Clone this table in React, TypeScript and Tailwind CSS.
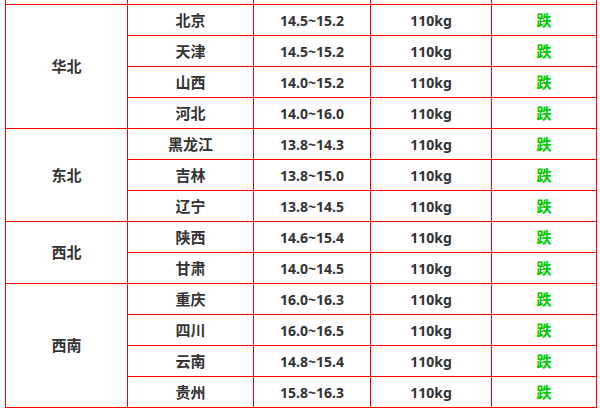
import React from "react";

type Row = { city: string; range: string };
type Group = { region: string; rows: Row[] };

const groups: Group[] = [
  {
    region: "华北",
    rows: [
      { city: "北京", range: "14.5~15.2" },
      { city: "天津", range: "14.5~15.2" },
      { city: "山西", range: "14.0~15.2" },
      { city: "河北", range: "14.0~16.0" },
    ],
  },
  {
    region: "东北",
    rows: [
      { city: "黑龙江", range: "13.8~14.3" },
      { city: "吉林", range: "13.8~15.0" },
      { city: "辽宁", range: "13.8~14.5" },
    ],
  },
  {
    region: "西北",
    rows: [
      { city: "陕西", range: "14.6~15.4" },
      { city: "甘肃", range: "14.0~14.5" },
    ],
  },
  {
    region: "西南",
    rows: [
      { city: "重庆", range: "16.0~16.3" },
      { city: "四川", range: "16.0~16.5" },
      { city: "云南", range: "14.8~15.4" },
      { city: "贵州", range: "15.8~16.3" },
    ],
  },
];

const cell = "flex items-center justify-center border-l border-t border-[#ff0000] font-bold";

export default function App() {
  return (
    <div className="w-[600px] h-[412px] overflow-hidden bg-white font-['Noto_Sans','Noto_Sans_CJK_SC',sans-serif]">
      <div className="ml-[5px] w-[592px]">
        <div className="flex h-[4px]">
          <div className="w-[122px] border-l border-[#ff0000]" />
          <div className="w-[126px] border-l border-[#ff0000]" />
          <div className="w-[117px] border-l border-[#ff0000]" />
          <div className="w-[121px] border-l border-[#ff0000]" />
          <div className="w-[106px] border-l border-r border-[#ff0000]" />
        </div>
        <div className="border-b border-[#ff0000]">
          {groups.map((g) => (
            <div key={g.region} className="flex">
              <div className={`${cell} w-[122px] text-[15px] text-[#333333]`}>{g.region}</div>
              <div className="flex flex-col">
                {g.rows.map((row) => (
                  <div key={row.city} className="flex h-[31px]">
                    <div className={`${cell} w-[126px] text-[15px] text-[#333333]`}>{row.city}</div>
                    <div className={`${cell} w-[117px] text-[14px] text-[#333333]`}>{row.range}</div>
                    <div className={`${cell} w-[121px] text-[14px] text-[#333333]`}>110kg</div>
                    <div className={`${cell} w-[106px] border-r text-[15px] text-[#00cc00]`}>跌</div>
                  </div>
                ))}
              </div>
            </div>
          ))}
        </div>
      </div>
    </div>
  );
}
